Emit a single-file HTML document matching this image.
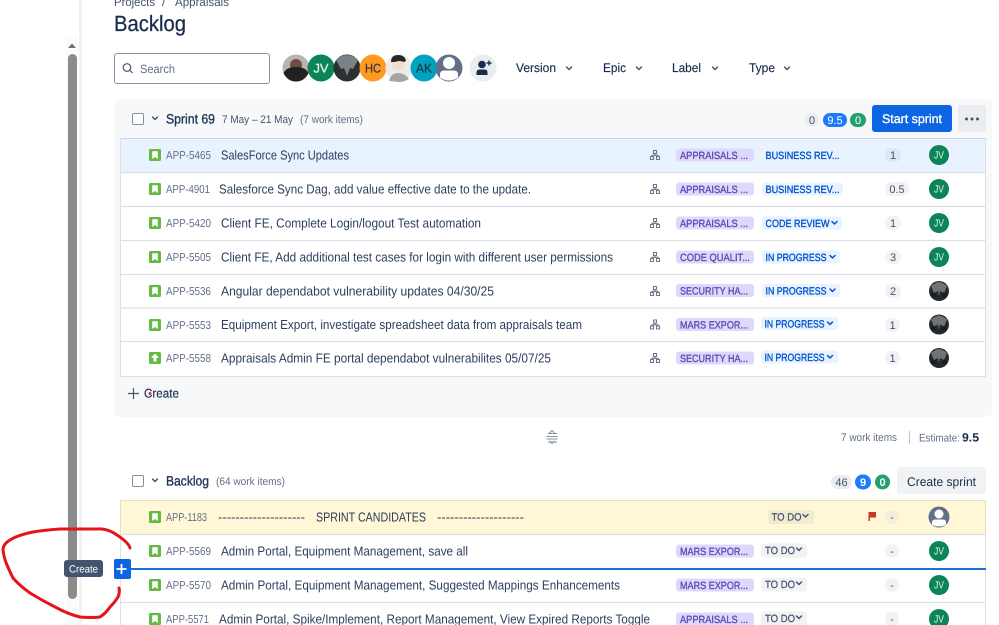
<!DOCTYPE html>
<html><head><meta charset="utf-8"><style>
html,body{margin:0;padding:0;background:#fff;width:999px;height:625px;overflow:hidden}
svg{display:block;font-family:"Liberation Sans",sans-serif;filter:blur(.3px)}
.t{font-size:13px;fill:#2c3e5d;transform:translateY(-.5px)}
.k{font-size:11.5px;fill:#626f86}
.l{font-size:10.5px;fill:#5e4db2;stroke:#5e4db2;stroke-width:.35}
.s{font-size:10.5px;fill:#0055cc;stroke:#0055cc;stroke-width:.35}
.d{font-size:10.5px;fill:#44546f;stroke:#44546f;stroke-width:.25}
.e{font-size:11px;fill:#44546f;text-anchor:middle}
.f{font-size:12.5px;fill:#172b4d;stroke:#172b4d;stroke-width:.15}
.h{font-size:13.5px;fill:#22365a;stroke:#22365a;stroke-width:.35}
.g{font-size:11px;fill:#626f86}
.c{fill:none;stroke-width:1.500;stroke-linecap:round;stroke-linejoin:round}
</style></head><body>
<svg width="999" height="625" viewBox="0 0 999 625" xmlns="http://www.w3.org/2000/svg" text-rendering="geometricPrecision">
<defs>
<g id="bm"><rect width="12" height="12" rx="1.500" fill="#65ba43"/><path d="M3.200 2.300h5.600v7.700L6 8 3.200 10z" fill="#fff"/></g>
<g id="hi"><path d="M653.500 150.500h3v3h-3zM650.500 156.500h3v3h-3zM656.500 156.500h3v3h-3zM655 154v1.300M652 156.500v-1.200h6v1.200" fill="none" stroke="#6b778c" stroke-width="1.100"/></g>
<g id="jv"><circle r="10" fill="#0b8457"/><text y="3.500" text-anchor="middle" font-size="10.500" fill="#dff5ea" textLength="10" lengthAdjust="spacingAndGlyphs">JV</text></g>
<g id="al"><circle r="10" fill="#26292c"/><path d="M-8-5 Q-3-9 0-9 Q3-9 8-5 L5 2 L1 0 L0 5 L-1 0 L-5 2Z" fill="#6f7376"/><circle cx="-5.500" cy="4" r="2.500" fill="#1b1d20"/><circle cx="5.500" cy="4" r="2.500" fill="#1b1d20"/></g>
<g id="ua"><circle r="10.500" fill="#626f86"/><circle cy="-3" r="4.500" fill="#fff"/><path d="M-7 7.500v-2q0-3 3-3h8q3 0 3 3v2q-3 2-7 2t-7-2z" fill="#fff"/></g>
</defs>

<!-- sidebar edge and scrollbar -->
<rect x="79" width="3" height="625" fill="#f1f2f4"/>
<rect x="66" y="38" width="12" height="587" fill="#fbfbfb"/>
<path d="M68 48l4-4.500 4 4.500z" fill="#6f6f6f"/>
<rect x="68" y="54" width="9" height="545" rx="4.500" fill="#8b8b8b"/>

<!-- heading -->
<text x="114" y="6" font-size="12" fill="#44546f" textLength="41" lengthAdjust="spacingAndGlyphs">Projects</text>
<text x="162" y="6" font-size="12" fill="#44546f">/</text>
<text x="175" y="6" font-size="12" fill="#44546f" textLength="54" lengthAdjust="spacingAndGlyphs">Appraisals</text>
<text x="114" y="31" font-size="22" fill="#172b4d" stroke="#172b4d" stroke-width=".25" textLength="72" lengthAdjust="spacingAndGlyphs">Backlog</text>

<!-- search -->
<rect x="114.500" y="53.500" width="155" height="30" rx="2.500" fill="#fff" stroke="#8993a4"/>
<circle cx="127" cy="67.500" r="3.800" fill="none" stroke="#44546f" stroke-width="1.200"/>
<path d="M130 70.500l2.500 2.500" stroke="#44546f" stroke-width="1.200"/>
<text x="140" y="73" font-size="12" fill="#626f86" textLength="35" lengthAdjust="spacingAndGlyphs">Search</text>

<!-- avatars -->
<circle cx="296" cy="68" r="13.500" fill="#b8b5b0"/>
<circle cx="296" cy="65" r="6" fill="#6c4f40"/>
<path d="M283.500 73q3-6 12.500-6t12.500 6q-4 8.500-12.500 8.500t-12.500-8.500z" fill="#232020"/>
<circle cx="321" cy="68" r="13.500" fill="#0b8457"/>
<text x="321" y="72.500" text-anchor="middle" font-size="12.500" fill="#dff5ea" stroke="#dff5ea" stroke-width=".3" textLength="15" lengthAdjust="spacingAndGlyphs">JV</text>
<circle cx="347" cy="68" r="13.500" fill="#2b3033"/>
<path d="M336 60q5-5 11-5t11 5l-5 9-3-1-3 8-3-8-3 1z" fill="#7b8184"/>
<circle cx="373" cy="68" r="13.500" fill="#ff991f"/>
<text x="373" y="72.500" text-anchor="middle" font-size="12.500" fill="#3b3b45" stroke="#3b3b45" stroke-width=".3" textLength="16" lengthAdjust="spacingAndGlyphs">HC</text>
<circle cx="399" cy="68" r="13.500" fill="#ececec"/>
<circle cx="398" cy="64" r="6.500" fill="#f0dcd0"/>
<path d="M391 62q0-7 7-7t8 6l-2 1q-5-2-9 0z" fill="#2a2624"/>
<path d="M389 81q2-8 9-8t11 6q-5 3-10 3z" fill="#a5a5a5"/>
<circle cx="424" cy="68" r="13.500" fill="#00a3bf"/>
<text x="424" y="72.500" text-anchor="middle" font-size="12.500" fill="#1c3a52" stroke="#1c3a52" stroke-width=".3" textLength="16" lengthAdjust="spacingAndGlyphs">AK</text>
<circle cx="449" cy="68" r="13.500" fill="#626f86"/>
<circle cx="449" cy="63" r="6" fill="#fff"/>
<path d="M440 77.500v-3q0-4 4-4h10q4 0 4 4v3q-4 3-9 3t-9-3z" fill="#fff"/>
<circle cx="483" cy="68" r="13.500" fill="#ebecf0"/>
<circle cx="482" cy="64.500" r="3.800" fill="#172b4d"/>
<path d="M476.500 75v-2.500q0-3 3-3h5q3 0 3 3V75z" fill="#172b4d"/>
<path d="M489 60.500v5M486.500 63h5" stroke="#172b4d" stroke-width="1.400"/>

<!-- filters -->
<text class="f" x="516" y="72" textLength="40" lengthAdjust="spacingAndGlyphs">Version</text>
<path class="c" d="M566.500 67l2.500 2.500 2.500-2.500" stroke="#44546f"/>
<text class="f" x="603" y="72" textLength="23" lengthAdjust="spacingAndGlyphs">Epic</text>
<path class="c" d="M636.500 67l2.500 2.500 2.500-2.500" stroke="#44546f"/>
<text class="f" x="672" y="72" textLength="29" lengthAdjust="spacingAndGlyphs">Label</text>
<path class="c" d="M712.500 67l2.500 2.500 2.500-2.500" stroke="#44546f"/>
<text class="f" x="749" y="72" textLength="26" lengthAdjust="spacingAndGlyphs">Type</text>
<path class="c" d="M784.500 67l2.500 2.500 2.500-2.500" stroke="#44546f"/>

<!-- sprint container -->
<rect x="114" y="99" width="878" height="318" rx="5" fill="#f7f8f9"/>
<rect x="132.500" y="113.500" width="11" height="11" rx="1.500" fill="#fff" stroke="#8590a2"/>
<path class="c" d="M152.500 117l2.500 2.500 2.500-2.500" stroke="#44546f"/>
<text class="h" x="166" y="123.500" textLength="49" lengthAdjust="spacingAndGlyphs">Sprint 69</text>
<text x="222" y="123" font-size="11" fill="#44546f" textLength="71" lengthAdjust="spacingAndGlyphs">7 May – 21 May</text>
<text class="g" x="300" y="123" textLength="63" lengthAdjust="spacingAndGlyphs">(7 work items)</text>
<rect x="805" y="113" width="14" height="14" rx="7" fill="#ebecf0"/>
<text class="e" x="812" y="124">0</text>
<rect x="823" y="113" width="24" height="14" rx="7" fill="#1d7afc"/>
<text x="835" y="124" font-size="11" fill="#fff" text-anchor="middle">9.5</text>
<rect x="850" y="113" width="16" height="14" rx="7" fill="#22a06b"/>
<text x="858" y="124" font-size="11" fill="#fff" text-anchor="middle">0</text>
<rect x="872" y="105" width="80" height="27" rx="3" fill="#0c66e4"/>
<text x="882" y="123" font-size="12.500" fill="#fff" stroke="#fff" stroke-width=".35" textLength="60" lengthAdjust="spacingAndGlyphs">Start sprint</text>
<rect x="958" y="105" width="28" height="27" rx="3" fill="#ebecf0"/>
<circle cx="966.500" cy="119" r="1.500" fill="#44546f"/><circle cx="972" cy="119" r="1.500" fill="#44546f"/><circle cx="977.500" cy="119" r="1.500" fill="#44546f"/>

<!-- sprint table -->
<rect x="120.500" y="138.500" width="865" height="238" fill="#fff" stroke="#dcdfe4"/>
<rect x="121" y="139" width="864" height="33" fill="#e9f2ff"/>
<rect x="120" y="138" width="866" height="1" fill="#c9d4e4"/>
<path d="M120 172.500h866M120 206.500h866M120 240.500h866M120 274.500h866M120 308h866M120 341.500h866" stroke="#dcdfe4" stroke-width="1.200"/>

<use href="#bm" x="149" y="149"/>
<text class="k" x="166" y="159" textLength="45" lengthAdjust="spacingAndGlyphs">APP-5465</text>
<text class="t" x="221" y="160" textLength="128" lengthAdjust="spacingAndGlyphs">SalesForce Sync Updates</text>
<use href="#hi"/>
<rect x="676" y="148.500" width="78" height="13" rx="3" fill="#dfd8fd"/>
<text class="l" x="680" y="159" textLength="68" lengthAdjust="spacingAndGlyphs">APPRAISALS ...</text>
<text class="s" x="765.500" y="159" textLength="74" lengthAdjust="spacingAndGlyphs">BUSINESS REV...</text>
<rect x="885" y="148" width="16" height="14" rx="7" fill="#dde6f3"/>
<text class="e" x="893" y="159">1</text>
<use href="#jv" x="939" y="155"/>

<use href="#bm" x="149" y="183"/>
<text class="k" x="166" y="193" textLength="44" lengthAdjust="spacingAndGlyphs">APP-4901</text>
<text class="t" x="219" y="194" textLength="312" lengthAdjust="spacingAndGlyphs">Salesforce Sync Dag, add value effective date to the update.</text>
<use href="#hi" y="34"/>
<rect x="676" y="182.500" width="78" height="13" rx="3" fill="#dfd8fd"/>
<text class="l" x="680" y="193" textLength="68" lengthAdjust="spacingAndGlyphs">APPRAISALS ...</text>
<rect x="762" y="182.500" width="81" height="13" rx="3" fill="#e9f2ff"/>
<text class="s" x="765.500" y="193" textLength="74" lengthAdjust="spacingAndGlyphs">BUSINESS REV...</text>
<rect x="885" y="182" width="24" height="14" rx="7" fill="#f1f2f4"/>
<text class="e" x="897" y="193">0.5</text>
<use href="#jv" x="939" y="189"/>

<use href="#bm" x="149" y="217"/>
<text class="k" x="166" y="227" textLength="45" lengthAdjust="spacingAndGlyphs">APP-5420</text>
<text class="t" x="221" y="228" textLength="260" lengthAdjust="spacingAndGlyphs">Client FE, Complete Login/logout Test automation</text>
<use href="#hi" y="68"/>
<rect x="676" y="216.500" width="78" height="13" rx="3" fill="#dfd8fd"/>
<text class="l" x="680" y="227" textLength="68" lengthAdjust="spacingAndGlyphs">APPRAISALS ...</text>
<rect x="762" y="216.500" width="80" height="13" rx="3" fill="#e9f2ff"/>
<text class="s" x="765.500" y="227" textLength="64" lengthAdjust="spacingAndGlyphs">CODE REVIEW</text>
<path class="c" d="M832 221.500l2.500 2.500 2.500-2.500" stroke="#0055cc"/>
<rect x="885" y="216" width="16" height="14" rx="7" fill="#f1f2f4"/>
<text class="e" x="893" y="227">1</text>
<use href="#jv" x="939" y="223"/>

<use href="#bm" x="149" y="251"/>
<text class="k" x="166" y="261" textLength="45" lengthAdjust="spacingAndGlyphs">APP-5505</text>
<text class="t" x="221" y="262" textLength="392" lengthAdjust="spacingAndGlyphs">Client FE, Add additional test cases for login with different user permissions</text>
<use href="#hi" y="102"/>
<rect x="676" y="250.500" width="78" height="13" rx="3" fill="#dfd8fd"/>
<text class="l" x="680" y="261" textLength="70" lengthAdjust="spacingAndGlyphs">CODE QUALIT...</text>
<rect x="762" y="250.500" width="78" height="13" rx="3" fill="#e9f2ff"/>
<text class="s" x="765.500" y="261" textLength="61" lengthAdjust="spacingAndGlyphs">IN PROGRESS</text>
<path class="c" d="M830 255.500l2.500 2.500 2.500-2.500" stroke="#0055cc"/>
<rect x="885" y="250" width="16" height="14" rx="7" fill="#f1f2f4"/>
<text class="e" x="893" y="261">3</text>
<use href="#jv" x="939" y="257"/>

<use href="#bm" x="149" y="285"/>
<text class="k" x="166" y="295" textLength="45" lengthAdjust="spacingAndGlyphs">APP-5536</text>
<text class="t" x="221" y="296" textLength="273" lengthAdjust="spacingAndGlyphs">Angular dependabot vulnerability updates 04/30/25</text>
<use href="#hi" y="136"/>
<rect x="676" y="284" width="78" height="13" rx="3" fill="#dfd8fd"/>
<text class="l" x="680" y="294.500" textLength="68" lengthAdjust="spacingAndGlyphs">SECURITY HA...</text>
<rect x="762" y="284" width="78" height="13" rx="3" fill="#e9f2ff"/>
<text class="s" x="765.500" y="294.500" textLength="61" lengthAdjust="spacingAndGlyphs">IN PROGRESS</text>
<path class="c" d="M830 289l2.500 2.500 2.500-2.500" stroke="#0055cc"/>
<rect x="885" y="284" width="16" height="14" rx="7" fill="#f1f2f4"/>
<text class="e" x="893" y="295">2</text>
<use href="#al" x="939" y="291"/>

<use href="#bm" x="149" y="319"/>
<text class="k" x="166" y="329" textLength="45" lengthAdjust="spacingAndGlyphs">APP-5553</text>
<text class="t" x="221" y="329.500" textLength="361" lengthAdjust="spacingAndGlyphs">Equipment Export, investigate spreadsheet data from appraisals team</text>
<use href="#hi" y="169.500"/>
<rect x="676" y="318" width="78" height="13" rx="3" fill="#dfd8fd"/>
<text class="l" x="680" y="328.500" textLength="68" lengthAdjust="spacingAndGlyphs">MARS EXPOR...</text>
<rect x="761" y="317" width="77" height="13" rx="3" fill="#e9f2ff"/>
<text class="s" x="764.500" y="327.500" textLength="60" lengthAdjust="spacingAndGlyphs">IN PROGRESS</text>
<path class="c" d="M827.500 322l2.500 2.500 2.500-2.500" stroke="#0055cc"/>
<rect x="885" y="318" width="15" height="14" rx="7" fill="#f1f2f4"/>
<text class="e" x="892.500" y="329">1</text>
<use href="#al" x="939" y="324.500"/>

<rect x="149" y="352" width="12" height="12" rx="1.500" fill="#65ba43"/>
<path d="M155 353.500l4 4.200h-2.500v3.800h-3v-3.800H151z" fill="#fff"/>
<text class="k" x="166" y="362" textLength="45" lengthAdjust="spacingAndGlyphs">APP-5558</text>
<text class="t" x="221" y="363" textLength="330" lengthAdjust="spacingAndGlyphs">Appraisals Admin FE portal dependabot vulnerabilites 05/07/25</text>
<use href="#hi" y="203"/>
<rect x="676" y="351.500" width="78" height="13" rx="3" fill="#dfd8fd"/>
<text class="l" x="680" y="362" textLength="68" lengthAdjust="spacingAndGlyphs">SECURITY HA...</text>
<rect x="761" y="350.500" width="77" height="13" rx="3" fill="#e9f2ff"/>
<text class="s" x="764.500" y="361" textLength="60" lengthAdjust="spacingAndGlyphs">IN PROGRESS</text>
<path class="c" d="M827.500 355.500l2.500 2.500 2.500-2.500" stroke="#0055cc"/>
<rect x="885" y="351" width="15" height="14" rx="7" fill="#f1f2f4"/>
<text class="e" x="892.500" y="362">1</text>
<use href="#al" x="939" y="358"/>

<!-- create -->
<path d="M133.500 388v11M128 393.500h11" stroke="#44546f" stroke-width="1.200"/>
<text x="144" y="397.500" font-size="12.500" fill="#22365a" stroke="#22365a" stroke-width=".2" textLength="35" lengthAdjust="spacingAndGlyphs">Create</text>
<circle cx="150" cy="393.500" r="1.500" fill="#e8232a"/>

<!-- summary -->
<path d="M548 433.500h9M546.500 436.500h11M546.500 439h11M548 442h9" stroke="#8590a2" stroke-width="1"/>
<path d="M549.500 433l2.500-2.500 2.500 2.500M549.500 441l2.500 2.500 2.500-2.500" fill="none" stroke="#8590a2"/>
<text x="841" y="441" font-size="11" fill="#626f86" textLength="56" lengthAdjust="spacingAndGlyphs">7 work items</text>
<rect x="909" y="431" width="1" height="13" fill="#c1c7d0"/>
<text x="919" y="441.500" font-size="11" fill="#626f86" textLength="41" lengthAdjust="spacingAndGlyphs">Estimate:</text>
<text x="962" y="441.500" font-size="12" font-weight="bold" fill="#172b4d" textLength="17" lengthAdjust="spacingAndGlyphs">9.5</text>

<!-- backlog header -->
<rect x="132.500" y="475.500" width="11" height="11" rx="1.500" fill="#fff" stroke="#8590a2"/>
<path class="c" d="M152.500 479l2.500 2.500 2.500-2.500" stroke="#44546f"/>
<text class="h" x="166" y="485.500" textLength="43" lengthAdjust="spacingAndGlyphs">Backlog</text>
<text class="g" x="216" y="485" textLength="69" lengthAdjust="spacingAndGlyphs">(64 work items)</text>
<rect x="831" y="475" width="21" height="14" rx="7" fill="#ebecf0"/>
<text class="e" x="841.500" y="486">46</text>
<rect x="855" y="474.500" width="16" height="15" rx="7.500" fill="#1d7afc"/>
<text x="863" y="486" font-size="11" font-weight="bold" fill="#fff" text-anchor="middle">9</text>
<rect x="875" y="474.500" width="15" height="15" rx="7.500" fill="#22a06b"/>
<text x="882.500" y="486" font-size="11" font-weight="bold" fill="#fff" text-anchor="middle">0</text>
<rect x="897" y="467" width="89" height="27" rx="3" fill="#f1f2f4"/>
<text x="907" y="486" font-size="12.500" fill="#172b4d" textLength="69" lengthAdjust="spacingAndGlyphs">Create sprint</text>

<!-- backlog table -->
<rect x="120.500" y="500.500" width="865" height="130" fill="#fff" stroke="#dcdfe4"/>
<rect x="120.500" y="500.500" width="865" height="34" fill="#fff7d6" stroke="#e6dfc0"/>
<path d="M120 534.500h866M120 602.500h866" stroke="#dcdfe4" stroke-width="1.200"/>

<use href="#bm" x="149" y="511"/>
<text class="k" x="166" y="521" textLength="41" lengthAdjust="spacingAndGlyphs">APP-1183</text>
<text class="t" x="218" y="522" textLength="87" lengthAdjust="spacingAndGlyphs">--------------------</text>
<text class="t" x="316" y="522" textLength="110" lengthAdjust="spacingAndGlyphs">SPRINT CANDIDATES</text>
<text class="t" x="437" y="522" textLength="87" lengthAdjust="spacingAndGlyphs">--------------------</text>
<rect x="768" y="510" width="46" height="14" rx="3" fill="#f1ebd0"/>
<text class="d" x="771.500" y="520.500" textLength="30" lengthAdjust="spacingAndGlyphs">TO DO</text>
<path class="c" d="M803 514.500l2.500 2.500 2.500-2.500" stroke="#44546f"/>
<path d="M868.500 512h7.500v5.500h-6v3.500h-1.500z" fill="#c9372c"/>
<rect x="885" y="510" width="14" height="14" rx="7" fill="#f3efdc"/>
<text class="e" x="892" y="521">-</text>
<use href="#ua" x="939" y="517"/>

<use href="#bm" x="149" y="545"/>
<text class="k" x="166" y="555" textLength="45" lengthAdjust="spacingAndGlyphs">APP-5569</text>
<text class="t" x="221" y="556" textLength="247" lengthAdjust="spacingAndGlyphs">Admin Portal, Equipment Management, save all</text>
<rect x="676" y="544.500" width="78" height="13" rx="3" fill="#dfd8fd"/>
<text class="l" x="680" y="555" textLength="68" lengthAdjust="spacingAndGlyphs">MARS EXPOR...</text>
<rect x="761" y="543.500" width="46" height="14" rx="3" fill="#f1f2f4"/>
<text class="d" x="765" y="554" textLength="30" lengthAdjust="spacingAndGlyphs">TO DO</text>
<path class="c" d="M796.500 548l2.500 2.500 2.500-2.500" stroke="#44546f"/>
<rect x="885" y="544" width="14" height="14" rx="7" fill="#f1f2f4"/>
<text class="e" x="892" y="555">-</text>
<use href="#jv" x="939" y="551"/>

<rect x="131" y="568" width="855" height="2" fill="#1f6fd8"/>

<use href="#bm" x="149" y="579"/>
<text class="k" x="166" y="589" textLength="45" lengthAdjust="spacingAndGlyphs">APP-5570</text>
<text class="t" x="221" y="590" textLength="399" lengthAdjust="spacingAndGlyphs">Admin Portal, Equipment Management, Suggested Mappings Enhancements</text>
<rect x="676" y="578.500" width="78" height="13" rx="3" fill="#dfd8fd"/>
<text class="l" x="680" y="589" textLength="68" lengthAdjust="spacingAndGlyphs">MARS EXPOR...</text>
<rect x="761" y="577.500" width="46" height="14" rx="3" fill="#f1f2f4"/>
<text class="d" x="765" y="588" textLength="30" lengthAdjust="spacingAndGlyphs">TO DO</text>
<path class="c" d="M796.500 582l2.500 2.500 2.500-2.500" stroke="#44546f"/>
<rect x="885" y="578" width="14" height="14" rx="7" fill="#f1f2f4"/>
<text class="e" x="892" y="589">-</text>
<use href="#jv" x="939" y="585"/>

<use href="#bm" x="149" y="613"/>
<text class="k" x="166" y="623" textLength="43" lengthAdjust="spacingAndGlyphs">APP-5571</text>
<text class="t" x="219" y="624" textLength="431" lengthAdjust="spacingAndGlyphs">Admin Portal, Spike/Implement, Report Management, View Expired Reports Toggle</text>
<rect x="676" y="612.500" width="78" height="13" rx="3" fill="#dfd8fd"/>
<text class="l" x="680" y="623" textLength="68" lengthAdjust="spacingAndGlyphs">APPRAISALS ...</text>
<rect x="761" y="611.500" width="46" height="14" rx="3" fill="#f1f2f4"/>
<text class="d" x="765" y="622" textLength="30" lengthAdjust="spacingAndGlyphs">TO DO</text>
<path class="c" d="M796.500 616l2.500 2.500 2.500-2.500" stroke="#44546f"/>
<rect x="885" y="612" width="14" height="14" rx="7" fill="#f1f2f4"/>
<text class="e" x="892" y="623">-</text>
<use href="#jv" x="939" y="619"/>

<!-- tooltip and add button -->
<rect x="64" y="560" width="39" height="17" rx="3" fill="#44546f"/>
<text x="69" y="572.500" font-size="10.500" fill="#fff" textLength="29" lengthAdjust="spacingAndGlyphs">Create</text>
<rect x="114" y="559" width="17" height="20" rx="2" fill="#0c66e4"/>
<path d="M121.500 564v10M116.500 569h10" stroke="#fff" stroke-width="1.800"/>

<!-- red annotation -->
<path d="M130 548Q129 543 117 535Q107 528 97 529L60 529Q45 530 33 532Q18 535 10 540Q3 544 3 550Q4 558 7 565Q10 572 13 578Q20 586 30 593Q43 601 57 608Q68 614 80 617Q92 618 100 617Q106 613 110 607Q115 602 118 597Q120 592 119 588" fill="none" stroke="#e4141c" stroke-width="3" stroke-linecap="round" stroke-linejoin="round"/>
</svg>
</body></html>
